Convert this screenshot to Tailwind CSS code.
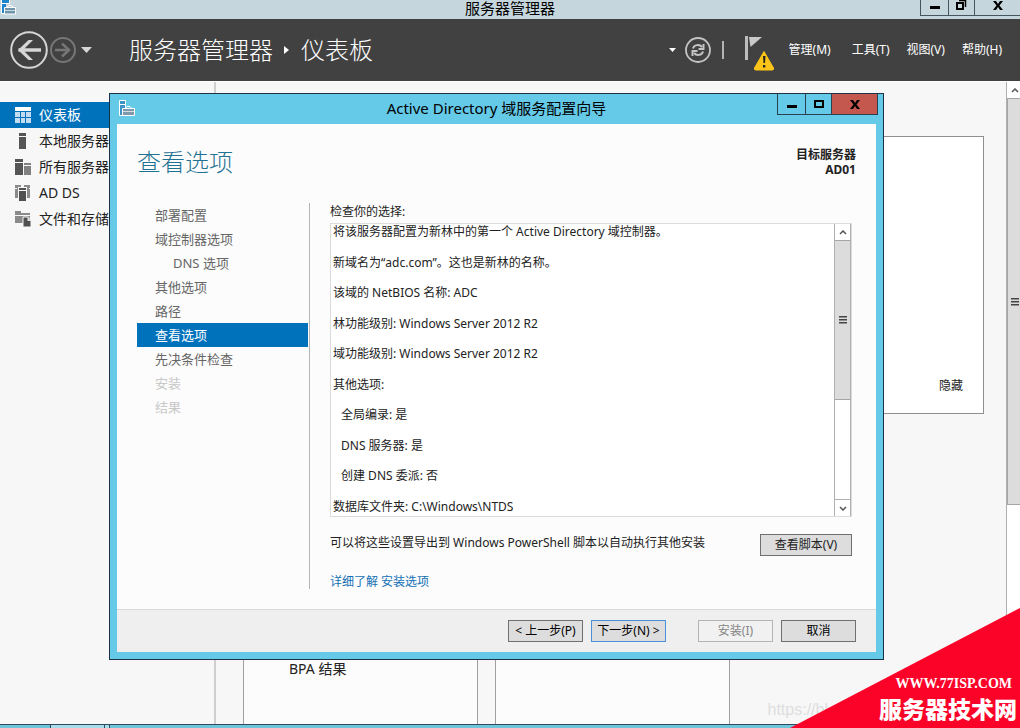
<!DOCTYPE html>
<html lang="zh-CN">
<head>
<meta charset="utf-8">
<title>服务器管理器</title>
<script src="https://cdn.jsdelivr.net/npm/@tailwindcss/browser@4"></script>
</head>
<body class="relative flex h-screen flex-col overflow-hidden bg-[#f7f7f7] font-['Noto_Sans','Noto_Sans_CJK_SC',sans-serif] text-xs text-[#222]">

<!-- Main window title bar -->
<header class="relative flex h-[19px] shrink-0 items-start justify-center bg-[#c5d7dd]">
  <svg class="absolute left-0 top-0" width="18" height="16" viewBox="0 0 18 16"><path d="M2 0h7v4H6v9H2z" fill="#1e86cc"/><path d="M1.500 0v13.500h3M2 3.500h7M9.500 0v4" fill="none" stroke="#fff"/><path d="M4.500 7.500h11v6.500h-11z" fill="#6f95ad" stroke="#fff"/><path d="M6.500 7.500l2-2h3l2 2" fill="none" stroke="#fff"/><path d="M5 10.500h10" stroke="#c9d9e2"/></svg>
  <h1 class="text-[15px] leading-4 text-black">服务器管理器</h1>
  <div class="absolute right-0 top-0 flex h-4 border-b border-l border-[#46565e]">
    <button aria-label="最小化" class="flex w-7 justify-center border-r border-[#46565e]"><svg width="10" height="15"><path d="M0 6h10v3H0z"/></svg></button>
    <button aria-label="还原" class="flex w-[26px] justify-center border-r border-[#46565e]"><svg width="11" height="15" fill="none" stroke="#000"><path d="M1 3h6v6H1z" stroke-width="2"/><path d="M3 .5h6.500V7" stroke-width="1.500"/></svg></button>
    <button aria-label="关闭" class="flex w-[45px] justify-center"><svg width="10" height="15"><path d="M0 1h3l2 3 2-3h3L6.500 5.500 10 10H7L5 7l-2 3H0l3.500-4.500z"/></svg></button>
  </div>
</header>

<!-- Navigation bar -->
<div class="flex h-[62px] shrink-0 items-center bg-[#414141] pl-[10px] pr-[18px] text-white">
  <button aria-label="后退"><svg width="39" height="40" viewBox="0 0 39 40" fill="none" stroke="#d6d6d6"><circle cx="19" cy="20" r="17.800" stroke-width="2"/><path d="M8.500 20H31" stroke-width="3.500"/><path d="M23 10h-4.500L8 20l10.500 10H23L13 20z" fill="#d6d6d6" stroke="none"/></svg></button>
  <button aria-label="前进"><svg width="28" height="28" viewBox="0 0 28 28" fill="none" stroke="#767676"><circle cx="14" cy="14" r="12" stroke-width="2"/><path d="M6 14h15" stroke-width="2.500"/><path d="M13 7.500l7 6.500-7 6.500" stroke-width="2.500"/></svg></button>
  <button aria-label="历史记录" class="ml-1"><svg width="12" height="8"><path d="M0 1h11L5.500 7z" fill="#d6d6d6"/></svg></button>
  <nav class="ml-9 flex items-center text-2xl font-light">
    <a href="#">服务器管理器</a>
    <svg class="mx-[11px]" width="6" height="10"><path d="M0 1l5 4-5 4z" fill="#fff"/></svg>
    <a href="#">仪表板</a>
  </nav>
  <button aria-label="更多" class="ml-auto mr-2"><svg width="8" height="5"><path d="M1 0h7L4.500 4z" fill="#fff"/></svg></button>
  <button aria-label="刷新"><svg width="28" height="28" viewBox="0 0 28 28" fill="none" stroke="#c4c4c4"><circle cx="14" cy="14" r="12" stroke-width="1.800"/><path d="M9 12.500c1-4 6.500-4.500 9-1.500M19 15.500c-1 4-6.500 4.500-9 1.500" stroke-width="2"/><path d="M19.500 8v5h-5M8.500 20v-5h5" stroke-width="2"/></svg></button>
  <span class="ml-[10px] mr-5 h-[18px] w-[2px] bg-[#b4b4b4]"></span>
  <button aria-label="通知" class="mt-1"><svg width="31" height="38" viewBox="0 0 31 38"><path d="M1 3h3v24H1z" fill="#bdbdbd"/><path d="M5 4h13L6.500 14z" fill="#c9c9c9"/><path d="M20 18.500L29.500 35q.5 2-1 2h-17q-1.500 0-1-2z" fill="#fcc419" stroke="#fcc419" stroke-linejoin="round"/><path d="M19 23h2.500l-.5 7h-1.500zM19 32h2.300v2.500H19z" fill="#222"/></svg></button>
  <nav class="ml-[14px] flex gap-[17px]">
    <button class="mr-1 whitespace-nowrap">管理(M)</button>
    <button class="whitespace-nowrap">工具(T)</button>
    <button class="whitespace-nowrap">视图(V)</button>
    <button class="whitespace-nowrap">帮助(H)</button>
  </nav>
</div>

<div class="flex min-h-0 flex-1 border-t border-white">
  <!-- Sidebar -->
  <aside class="w-[216px] shrink-0 border-r-2 border-[#cfcfcf] pt-5 text-sm">
    <a href="#" class="flex h-[26px] items-center gap-2 bg-[#0072bc] pl-[15px] text-white"><svg width="16" height="16"><path d="M0 5h5v5H0zM6 5h4v5H6zM0 11h5v5H0zM6 11h4v5H6zM11 5h5v5h-5zM11 11h5v5h-5z" fill="#c3dcef"/><path d="M0 0h16v4H0z" fill="#fff"/></svg>仪表板</a>
    <a href="#" class="flex h-[26px] items-center gap-2 pl-[15px]"><svg width="16" height="16" fill="#555"><path d="M4 0h7v3H4zM4 4h7v12H4z"/></svg>本地服务器</a>
    <a href="#" class="flex h-[26px] items-center gap-2 pl-[15px]"><svg width="16" height="16" fill="#555"><path d="M0 0h8v3H0zM0 4h8v12H0z"/><path d="M9 4h7v2H9zM9 7h7v9H9z" fill="#808080"/></svg>所有服务器</a>
    <a href="#" class="flex h-[26px] items-center gap-2 pl-[15px]"><svg width="16" height="16" fill="#8a8a8a"><path d="M0 0h6v2H3v11H0V4h2V3H0zM9 0h6v3h-1v1h1v9h-3V2H9z"/><path d="M4 3h7v2H4zM4 6h7v10H4z" fill="#505050"/></svg>AD DS</a>
    <a href="#" class="flex h-[26px] items-center gap-2 pl-[15px]"><svg width="16" height="16"><path d="M0 0h6v2h9v2H0zM0 5h15v7H0z" fill="#8a8a8a"/><path d="M8 6h5l3 4v6H8z" fill="#505050" stroke="#f7f7f7"/><path d="M12.500 6v4H16z" fill="#ddd"/></svg>文件和存储</a>
  </aside>

  <!-- Dashboard -->
  <main class="flex min-w-0 flex-1 flex-col pl-[27px] pr-[22px] pt-[54px]">
    <section class="flex h-[278px] shrink-0 items-end justify-end border border-[#8f8f8f] bg-white px-5 pb-[19px]">
      <button>隐藏</button>
    </section>
    <div class="mt-[60px] flex flex-1 gap-[17px]">
      <section class="w-[235px] border border-b-0 border-[#a0a0a4] bg-[#fcfcfc] pl-[45px] pt-[184px] text-sm leading-5">BPA 结果</section>
      <section class="w-[235px] border border-b-0 border-[#a0a0a4] bg-[#fcfcfc]"></section>
    </div>
  </main>

  <!-- Page scroll bar -->
  <div class="flex w-[14px] shrink-0 flex-col border-l border-[#b0b0b0] bg-white">
    <button aria-label="向上滚动" class="flex h-4 items-center justify-end pr-px"><svg width="8" height="5" fill="none" stroke="#555" stroke-width="1.500"><path d="M1 4l3-3 3 3"/></svg></button>
    <div class="flex h-[407px] items-center justify-end border-y border-l border-[#a6a6a6] bg-[#dcdcdc] pr-px"><svg width="8" height="8" fill="#444"><path d="M0 0h8v1.500H0zM0 3h8v1.500H0zM0 6h8v1.500H0z"/></svg></div>
  </div>
</div>

<!-- Taskbar -->
<footer class="flex h-1 shrink-0 border-t border-[#2b4b5e] bg-[#6fc6da] pl-[50px]">
  <span class="w-[55px] border-x border-[#2b4b5e] bg-[#aadcec]"></span>
  <span class="w-[5px] border-r border-[#2b4b5e] bg-[#aadcec]"></span>
</footer>

<!-- Wizard window -->
<div role="dialog" aria-labelledby="wizard-title" class="absolute left-[109px] right-[136px] top-[93px] border border-[#1d3345] bg-[#65c9e8] px-[7px] pb-[7px]">
  <div class="relative flex h-[30px] items-center justify-center">
    <svg class="absolute left-[2px] top-[6px]" width="17" height="18" viewBox="0 0 17 18"><path d="M.5 .5h6v15h-6z" fill="#3c93c4" stroke="#fff"/><path d="M1 4.500h6" stroke="#fff"/><path d="M3.500 8.500h12v7h-12z" fill="#7f98ab" stroke="#fff"/><path d="M6 8.500l2-2h3l2 2" fill="none" stroke="#fff"/><path d="M4 11.500h11" stroke="#d3dde4"/></svg>
    <h2 id="wizard-title" class="pb-[2px] text-[15px] text-black">Active Directory 域服务配置向导</h2>
    <div class="absolute -right-[2px] top-0 flex h-[21px] border-x border-b border-[#2c4150]">
      <button aria-label="最小化" class="flex w-7 items-center justify-center border-r border-[#2c4150]"><svg class="mt-1" width="10" height="3"><path d="M0 0h10v3H0z"/></svg></button>
      <button aria-label="最大化" class="flex w-[26px] items-center justify-center border-r border-[#2c4150]"><svg width="10" height="8"><path d="M1 1h8v6H1z" fill="none" stroke="#000" stroke-width="2"/></svg></button>
      <button aria-label="关闭" class="flex w-[45px] items-center justify-center bg-[#c4584f]"><svg width="10" height="9"><path d="M0 0h3l2 3 2-3h3L6.500 4.500 10 9H7L5 6 3 9H0l3.500-4.500z"/></svg></button>
    </div>
  </div>

  <div class="bg-[#fcfcfc]">
    <div class="flex h-[79px] items-start justify-between px-5 pt-[22px]">
      <h3 class="text-2xl font-light text-[#1f7292]">查看选项</h3>
      <p class="pt-px text-right font-bold leading-[15px]">目标服务器<br>AD01</p>
    </div>

    <div class="flex items-start pb-[19px] pl-5 pr-6">
      <nav class="h-[386px] w-[173px] shrink-0 border-r border-[#b5b5b5] pr-px text-[13px] leading-6 text-[#666]">
        <a href="#" class="block pl-[18px]">部署配置</a>
        <a href="#" class="block pl-[18px]">域控制器选项</a>
        <a href="#" class="block pl-9">DNS 选项</a>
        <a href="#" class="block pl-[18px]">其他选项</a>
        <a href="#" class="block pl-[18px]">路径</a>
        <a href="#" aria-current="step" class="block bg-[#0072bc] pl-[18px] text-white">查看选项</a>
        <a href="#" class="block pl-[18px]">先决条件检查</a>
        <a class="block pl-[18px] text-[#c8c8c8]">安装</a>
        <a class="block pl-[18px] text-[#c8c8c8]">结果</a>
      </nav>

      <div class="min-w-0 flex-1 pl-5">
        <p class="pb-[2px] leading-[18px]">检查你的选择:</p>
        <div class="flex h-[294px] border border-[#dcdcdc] bg-white">
          <div class="flex flex-1 flex-col justify-between pb-px pl-[2px] leading-4 whitespace-nowrap">
            <p>将该服务器配置为新林中的第一个 Active Directory 域控制器。</p>
            <p>新域名为<span class="font-['Noto_Sans']">“adc.com”</span>。这也是新林的名称。</p>
            <p>该域的 NetBIOS 名称: ADC</p>
            <p>林功能级别: Windows Server 2012 R2</p>
            <p>域功能级别: Windows Server 2012 R2</p>
            <p>其他选项:</p>
            <p class="pl-2">全局编录: 是</p>
            <p class="pl-2">DNS 服务器: 是</p>
            <p class="pl-2">创建 DNS 委派: 否</p>
            <p>数据库文件夹: C:\Windows\NTDS</p>
          </div>
          <div class="flex w-[17px] flex-col border-x border-[#b0b0b0]">
            <button aria-label="向上滚动" class="flex h-4 items-center justify-center"><svg width="8" height="5" fill="none" stroke="#555" stroke-width="1.500"><path d="M1 4l3-3 3 3"/></svg></button>
            <div class="flex h-[160px] items-center justify-center border-y border-[#a6a6a6] bg-[#dcdcdc]"><svg width="8" height="8" fill="#444"><path d="M0 0h8v1.500H0zM0 3h8v1.500H0zM0 6h8v1.500H0z"/></svg></div>
            <button aria-label="向下滚动" class="mt-auto flex h-[17px] items-center justify-center border-t border-[#b0b0b0]"><svg width="8" height="5" fill="none" stroke="#555" stroke-width="1.500"><path d="M1 1l3 3 3-3"/></svg></button>
          </div>
        </div>
        <div class="mt-[17px] flex items-start justify-between">
          <p class="leading-[18px]">可以将这些设置导出到 Windows PowerShell 脚本以自动执行其他安装</p>
          <button class="h-[22px] w-[92px] border border-[#707070] bg-[#dddddd]">查看脚本(V)</button>
        </div>
        <a href="#" class="mt-[18px] block w-fit leading-4 text-[#1470b4]">详细了解 安装选项</a>
      </div>
    </div>

    <div class="flex justify-end gap-2 border-t border-[#d9d9d9] bg-[#efefef] px-5 py-[10px] text-black">
      <button class="h-[22px] w-[75px] border border-[#707070] bg-[#dddddd] whitespace-nowrap">&lt; 上一步(P)</button>
      <button class="h-[22px] w-[75px] border border-[#4a90d9] bg-[#dddddd] whitespace-nowrap">下一步(N) &gt;</button>
      <button disabled class="ml-6 h-[22px] w-[75px] border border-[#b4b4b4] bg-[#f1f1f1] text-[#858585]">安装(I)</button>
      <button class="h-[22px] w-[75px] border border-[#707070] bg-[#dddddd]">取消</button>
    </div>
  </div>
</div>

<!-- Corner ribbon -->
<span class="absolute bottom-2 right-[192px] font-['Liberation_Sans'] text-base leading-5 text-[#dedede]">https://bl</span>
<div class="absolute bottom-0 right-0 flex h-[120px] w-[230px] flex-col items-end justify-end bg-[#fb0328] pb-[2px] text-white [clip-path:polygon(100%_0,100%_100%,0_100%)]">
  <span class="pr-2 font-['Liberation_Serif',serif] text-sm font-bold leading-4">WWW.77ISP.COM</span>
  <span class="pr-[3px] text-[23px] leading-[34px] font-black">服务器技术网</span>
</div>
</body>
</html>
